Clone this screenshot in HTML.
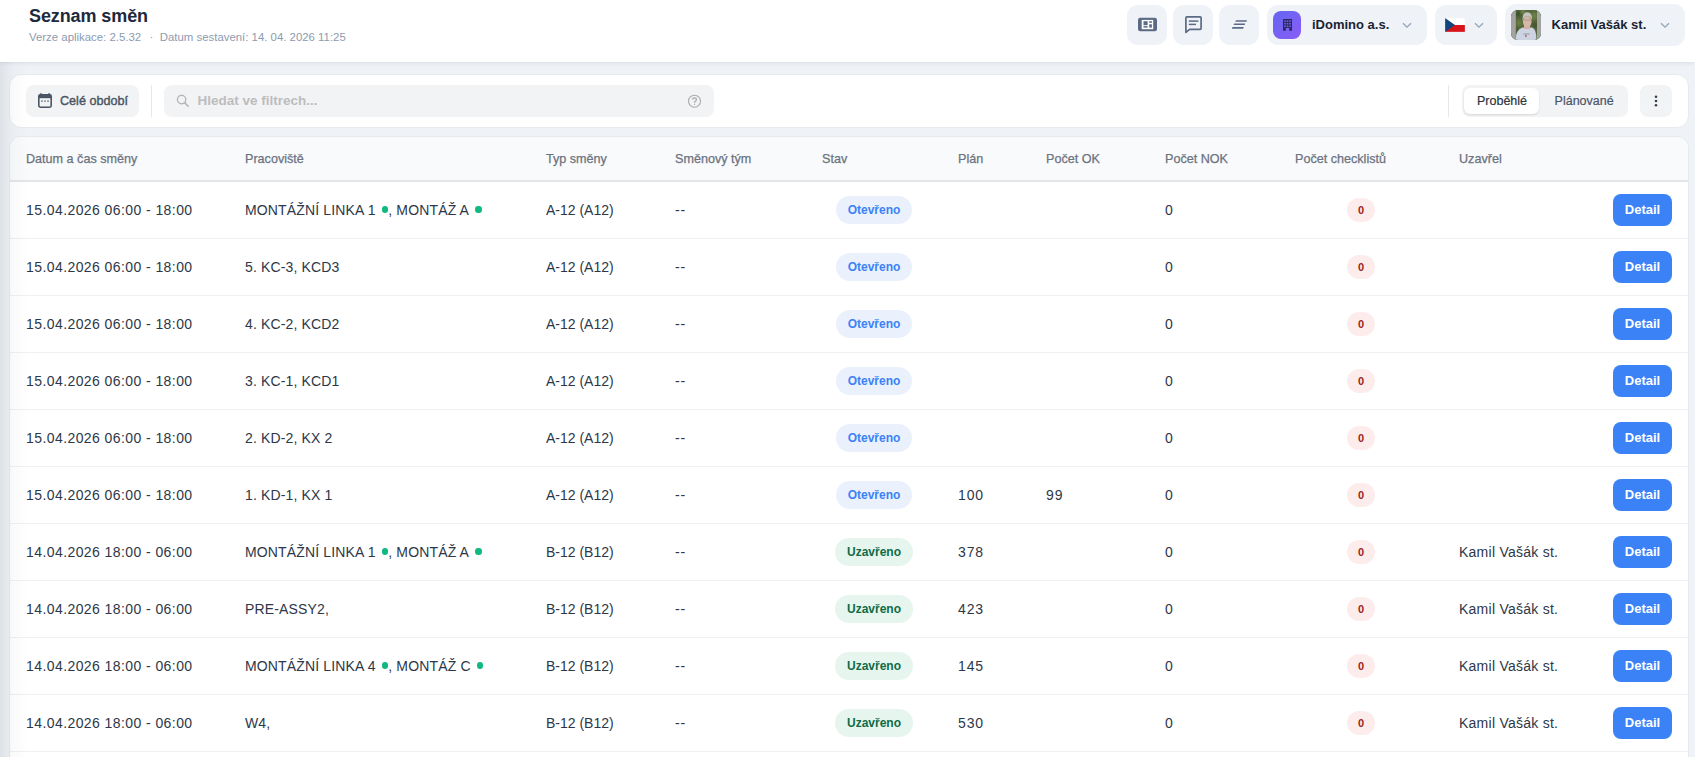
<!DOCTYPE html>
<html><head><meta charset="utf-8">
<style>
*{box-sizing:border-box;margin:0;padding:0}
html,body{width:1695px;height:757px;overflow:hidden}
body{background:#eff2f6;font-family:"Liberation Sans",sans-serif;position:relative;color:#2d3748}
.hdr{position:absolute;left:0;top:0;width:1695px;height:62px;background:#fff;box-shadow:0 1px 4px rgba(30,41,59,.10)}
.title{position:absolute;left:29px;top:7px;line-height:1;font-size:18px;font-weight:bold;color:#1e293b;letter-spacing:-0.1px}
.sub{position:absolute;left:29px;top:32.3px;line-height:1;font-size:11.4px;color:#8d9bb0;white-space:nowrap}
.ib{position:absolute;top:5px;width:40px;height:40px;border-radius:11px;background:#eff3f8}
.ib svg{position:absolute;left:0;top:0}
.drop{position:absolute;border-radius:11px;background:#eff3f8}
.bold{font-weight:bold;color:#1a2332;font-size:14px;position:absolute;white-space:nowrap}
.chev{position:absolute}
.ft{position:absolute;line-height:1;white-space:nowrap}
.card{position:absolute;left:9px;width:1680px;background:#fff;border:1px solid #e6e9ee;border-radius:12px}
.gbtn{position:absolute;background:#f2f3f5;border-radius:8px}
.shadowL{position:absolute;left:0;top:62px;width:30px;height:695px;background:linear-gradient(to right,rgba(15,23,42,.075),rgba(15,23,42,.035) 9px,rgba(15,23,42,.018) 14px,rgba(15,23,42,0) 28px)}
table{position:absolute;left:0;top:0;border-collapse:collapse;table-layout:fixed;width:1678px}
th{height:44px;background:#f9fafb;text-align:left;font-weight:normal;font-size:12.6px;color:#6b7280;padding:0 0 0 16px;border-bottom:2px solid #e3e5e9;-webkit-text-stroke:0.25px #6b7280;white-space:nowrap}
td{height:57px;border-bottom:1px solid #eef0f3;font-size:14px;padding:0 0 0 16px;white-space:nowrap;color:#2d3748}
.num{letter-spacing:0.9px}
.dt{letter-spacing:0.42px}
.wp{letter-spacing:0.15px}
.dd{letter-spacing:0.8px}
.uz{letter-spacing:0.25px}
.dot{display:inline-block;width:6.5px;height:6.5px;border-radius:50%;background:#10b981;margin:0 0 0 6px;vertical-align:2px}
.badge{display:inline-block;height:28px;line-height:28px;border-radius:14px;font-size:12px;font-weight:bold;padding:0 12px}
.open{background:#eaf1fd;color:#3b82f6}
.closed{background:#e6f6ef;color:#0f6b46}
.zero{display:inline-block;width:28px;height:24px;line-height:24px;border-radius:12px;background:#fdecec;color:#a11d1d;font-size:11px;font-weight:bold;text-align:center}
.c{text-align:center;padding:0}
.det{display:inline-block;width:59px;height:32px;line-height:32px;border-radius:8px;background:#3b82f6;color:#fff;font-weight:bold;font-size:13px;text-align:center}
</style></head><body>
<div class="hdr">
  <div class="title">Seznam směn</div>
  <div class="sub"><span style="position:absolute;left:0">Verze aplikace: 2.5.32</span><span style="position:absolute;left:120.5px">·</span><span style="position:absolute;left:130.8px">Datum sestavení: 14. 04. 2026 11:25</span></div>

  <div class="ib" style="left:1127px"><svg width="40" height="40" viewBox="0 0 40 40">
    <rect x="11" y="12.7" width="19" height="13.5" rx="2.2" fill="#5b6b85"/>
    <rect x="14.7" y="14.9" width="11.5" height="9.3" fill="#fff"/>
    <rect x="16.5" y="16.2" width="4.1" height="4" fill="#5b6b85"/>
    <rect x="22.2" y="16.2" width="2.7" height="1.6" fill="#5b6b85"/>
    <rect x="16.5" y="21.1" width="4.1" height="1.5" fill="#5b6b85"/>
    <rect x="22.2" y="19.3" width="2.7" height="3.3" fill="#5b6b85"/>
  </svg></div>
  <div class="ib" style="left:1173px"><svg width="40" height="40" viewBox="0 0 40 40">
    <path d="M13.9,11.8 H27.1 Q28.1,11.8 28.1,12.8 V23.3 Q28.1,24.3 27.1,24.3 H16.6 L12.9,27.4 V12.8 Q12.9,11.8 13.9,11.8 Z" fill="none" stroke="#5b6b85" stroke-width="1.7" stroke-linejoin="round"/>
    <line x1="15.8" y1="16.1" x2="25.4" y2="16.1" stroke="#5b6b85" stroke-width="1.5"/>
    <line x1="15.8" y1="19.4" x2="23" y2="19.4" stroke="#5b6b85" stroke-width="1.5"/>
  </svg></div>
  <div class="ib" style="left:1219px"><svg width="40" height="40" viewBox="0 0 40 40">
    <polygon points="16.9,15.2 28,15.2 27.5,16.8 16.4,16.8" fill="#5b6b85"/>
    <polygon points="15.1,18.5 26.2,18.5 25.7,20.1 14.6,20.1" fill="#5b6b85"/>
    <polygon points="13.4,22.1 24.7,22.1 24.2,23.7 12.9,23.7" fill="#5b6b85"/>
  </svg></div>

  <div class="drop" style="left:1267px;top:5px;width:160px;height:40px">
    <div style="position:absolute;left:6px;top:6px;width:28px;height:28px;border-radius:8px;background:linear-gradient(135deg,#6366f1,#8b5cf6)">
      <svg width="28" height="28" viewBox="0 0 28 28" style="position:absolute;left:0;top:0">
        <path d="M10,8 H19 V19.8 H16.2 V17 H12.8 V19.8 H10 Z" fill="#2c2766"/>
        <g fill="#6d62e6">
          <rect x="11.2" y="9.3" width="1.6" height="1.6"/><rect x="13.7" y="9.3" width="1.6" height="1.6"/><rect x="16.2" y="9.3" width="1.6" height="1.6"/>
          <rect x="11.2" y="11.9" width="1.6" height="1.6"/><rect x="13.7" y="11.9" width="1.6" height="1.6"/><rect x="16.2" y="11.9" width="1.6" height="1.6"/>
          <rect x="11.2" y="14.5" width="1.6" height="1.6"/><rect x="13.7" y="14.5" width="1.6" height="1.6"/><rect x="16.2" y="14.5" width="1.6" height="1.6"/>
        </g>
      </svg>
    </div>
    <div class="bold" style="left:45px;top:12.9px;font-size:13px;line-height:13px">iDomino a.s.</div>
    <svg class="chev" style="left:135px;top:17px" width="10" height="7" viewBox="0 0 10 7"><path d="M1,1.2 L5,5.2 L9,1.2" fill="none" stroke="#94a3b8" stroke-width="1.3"/></svg>
  </div>
  <div class="drop" style="left:1435px;top:5px;width:62px;height:40px">
    <svg style="position:absolute;left:10px;top:13px" width="20" height="14" viewBox="0 0 20 14">
      <rect x="0" y="0" width="20" height="7" fill="#ffffff"/><rect x="0" y="7" width="20" height="7" fill="#d7141a"/><polygon points="0,0 10,7 0,14" fill="#11457e"/>
      <rect x="0" y="0" width="20" height="14" fill="none" stroke="#e5e7eb" stroke-width="0.3"/>
    </svg>
    <svg class="chev" style="left:39px;top:17px" width="10" height="7" viewBox="0 0 10 7"><path d="M1,1.2 L5,5.2 L9,1.2" fill="none" stroke="#94a3b8" stroke-width="1.3"/></svg>
  </div>
  <div class="drop" style="left:1505px;top:4px;width:180px;height:42px">
    <div style="position:absolute;left:6px;top:6px;width:30px;height:30px;border-radius:7px;overflow:hidden;background:#4d6a3c">
      <svg width="30" height="30" viewBox="0 0 30 30" style="position:absolute;left:0;top:0">
        <defs><filter id="bl" x="-20%" y="-20%" width="140%" height="140%"><feGaussianBlur stdDeviation="0.9"/></filter><filter id="bl2"><feGaussianBlur stdDeviation="0.5"/></filter></defs>
        <rect x="0" y="0" width="30" height="30" fill="#55683c"/>
        <g filter="url(#bl)">
          <circle cx="7" cy="4" r="3" fill="#3d5429"/><circle cx="23" cy="6" r="3.5" fill="#6e7d48"/><circle cx="8" cy="13" r="3" fill="#6a7a40"/>
          <circle cx="24" cy="15" r="3" fill="#45592f"/><circle cx="12" cy="2" r="2" fill="#7d8a55"/><circle cx="6" cy="20" r="2.5" fill="#4a5f33"/>
        </g>
        <g filter="url(#bl2)">
          <path d="M4.5,30 Q5,19.5 11.5,17.5 L21,17.5 Q25.5,19 25.5,30 Z" fill="#ccd3e2"/>
          <rect x="13" y="14" width="6" height="5" fill="#d2b1a3"/>
          <ellipse cx="16.2" cy="11.8" rx="4.3" ry="5.6" fill="#d6b7a8"/>
          <path d="M11.6,11 Q11,2 16.4,2.2 Q21.6,2.4 21,11 Q20.3,6.5 16.3,6.6 Q12.4,6.6 11.6,11 Z" fill="#c4c3bf"/>
          <rect x="12.3" y="9.6" width="8" height="0.9" fill="#8b7d75" opacity=".55"/>
          <rect x="12.5" y="23.5" width="6" height="1" fill="#555" opacity=".5"/>
          <rect x="14" y="25" width="1.6" height="2" fill="#d84a4a" opacity=".8"/>
        </g>
        <rect x="0" y="0" width="4.8" height="30" fill="#a3a3a1"/>
        <rect x="26" y="0" width="4" height="30" fill="#a3a3a1"/>
      </svg>
    </div>
    <div class="bold" style="left:46.6px;top:14px;font-size:13px;line-height:13px">Kamil Vašák st.</div>
    <svg class="chev" style="left:155px;top:18px" width="10" height="7" viewBox="0 0 10 7"><path d="M1,1.2 L5,5.2 L9,1.2" fill="none" stroke="#94a3b8" stroke-width="1.3"/></svg>
  </div>
</div>

<div class="card" style="top:74px;height:54px"></div>
<div class="gbtn" style="left:26px;top:85px;width:113px;height:32px"></div>
<svg style="position:absolute;left:38px;top:93px" width="14" height="15" viewBox="0 0 14 15">
  <path d="M3,0.3 V2 M11,0.3 V2" stroke="#4b5563" stroke-width="1.6"/>
  <rect x="0.8" y="1.8" width="12.4" height="12.4" rx="1.6" fill="none" stroke="#4b5563" stroke-width="1.6"/>
  <rect x="0.8" y="1.8" width="12.4" height="3.4" fill="#4b5563"/>
  <rect x="3.2" y="7.5" width="1.5" height="1.2" fill="#4b5563"/><rect x="6.25" y="7.5" width="1.5" height="1.2" fill="#4b5563"/><rect x="9.3" y="7.5" width="1.5" height="1.2" fill="#4b5563"/>
</svg>
<div class="ft" style="left:60px;top:94.6px;font-size:12.6px;color:#4b5563;-webkit-text-stroke:0.4px #4b5563">Celé období</div>
<div style="position:absolute;left:151px;top:85px;width:1px;height:32px;background:#e5e7eb"></div>
<div class="gbtn" style="left:164px;top:85px;width:550px;height:32px"></div>
<svg style="position:absolute;left:176px;top:94px" width="14" height="14" viewBox="0 0 14 14">
  <circle cx="5.6" cy="5.6" r="4.2" fill="none" stroke="#b3b3b3" stroke-width="1.3"/>
  <line x1="8.6" y1="8.6" x2="12.2" y2="12.2" stroke="#b3b3b3" stroke-width="1.5" stroke-linecap="round"/>
</svg>
<div class="ft" style="left:197.5px;top:93.5px;font-size:13.5px;font-weight:bold;color:#bdbdbd">Hledat ve filtrech...</div>
<svg style="position:absolute;left:687px;top:94px" width="15" height="15" viewBox="0 0 15 15">
  <circle cx="7.5" cy="7.2" r="6" fill="none" stroke="#adadad" stroke-width="1.1"/>
  <path d="M5.7,5.6 Q5.7,3.8 7.6,3.8 Q9.4,3.8 9.4,5.4 Q9.4,6.6 8.3,7.2 Q7.6,7.6 7.6,8.7" fill="none" stroke="#a8a8a8" stroke-width="1.3"/>
  <rect x="6.9" y="9.7" width="1.2" height="1.1" fill="#adadad"/>
</svg>
<div style="position:absolute;left:1448px;top:85px;width:1px;height:32px;background:#e5e7eb"></div>
<div class="gbtn" style="left:1462px;top:85px;width:166px;height:32px"></div>
<div style="position:absolute;left:1464px;top:88px;width:75px;height:26px;border-radius:6px;background:#fff;box-shadow:0 1px 2px rgba(0,0,0,.12)"></div>
<div class="ft" style="left:1477px;top:95px;font-size:12.5px;color:#2d3340;-webkit-text-stroke:0.2px #2d3340">Proběhlé</div>
<div class="ft" style="left:1554.6px;top:95px;font-size:12.5px;color:#4a5568;-webkit-text-stroke:0.2px #4a5568">Plánované</div>
<div class="gbtn" style="left:1640px;top:85px;width:32px;height:32px"></div>
<svg style="position:absolute;left:1640px;top:85px" width="32" height="32" viewBox="0 0 32 32">
  <circle cx="16" cy="11.8" r="1.3" fill="#374151"/><circle cx="16" cy="16" r="1.3" fill="#374151"/><circle cx="16" cy="20.2" r="1.3" fill="#374151"/>
</svg>

<div class="card" style="top:136px;height:640px;overflow:hidden">
<table>
<colgroup><col style="width:219px"><col style="width:301px"><col style="width:129px"><col style="width:147px"><col style="width:136px"><col style="width:88px"><col style="width:119px"><col style="width:130px"><col style="width:164px"><col style="width:154px"><col style="width:91px"></colgroup>
<thead><tr><th>Datum a čas směny</th><th>Pracoviště</th><th>Typ směny</th><th>Směnový tým</th><th>Stav</th><th>Plán</th><th>Počet OK</th><th>Počet NOK</th><th>Počet checklistů</th><th>Uzavřel</th><th></th></tr></thead>
<tbody id="tb">
<tr><td class="dt">15.04.2026 06:00 - 18:00</td><td class="wp">MONTÁŽNÍ LINKA 1<span class="dot"></span>, MONTÁŽ A<span class="dot"></span></td><td>A-12 (A12)</td><td class="dd">--</td><td class="c"><span class="badge open">Otevřeno</span></td><td class="num"></td><td class="num"></td><td class="num">0</td><td class="c"><span class="zero">0</span></td><td class="uz"></td><td class="c" style="text-align:right;padding-right:16px"><span class="det">Detail</span></td></tr>
<tr><td class="dt">15.04.2026 06:00 - 18:00</td><td class="wp">5. KC-3, KCD3</td><td>A-12 (A12)</td><td class="dd">--</td><td class="c"><span class="badge open">Otevřeno</span></td><td class="num"></td><td class="num"></td><td class="num">0</td><td class="c"><span class="zero">0</span></td><td class="uz"></td><td class="c" style="text-align:right;padding-right:16px"><span class="det">Detail</span></td></tr>
<tr><td class="dt">15.04.2026 06:00 - 18:00</td><td class="wp">4. KC-2, KCD2</td><td>A-12 (A12)</td><td class="dd">--</td><td class="c"><span class="badge open">Otevřeno</span></td><td class="num"></td><td class="num"></td><td class="num">0</td><td class="c"><span class="zero">0</span></td><td class="uz"></td><td class="c" style="text-align:right;padding-right:16px"><span class="det">Detail</span></td></tr>
<tr><td class="dt">15.04.2026 06:00 - 18:00</td><td class="wp">3. KC-1, KCD1</td><td>A-12 (A12)</td><td class="dd">--</td><td class="c"><span class="badge open">Otevřeno</span></td><td class="num"></td><td class="num"></td><td class="num">0</td><td class="c"><span class="zero">0</span></td><td class="uz"></td><td class="c" style="text-align:right;padding-right:16px"><span class="det">Detail</span></td></tr>
<tr><td class="dt">15.04.2026 06:00 - 18:00</td><td class="wp">2. KD-2, KX 2</td><td>A-12 (A12)</td><td class="dd">--</td><td class="c"><span class="badge open">Otevřeno</span></td><td class="num"></td><td class="num"></td><td class="num">0</td><td class="c"><span class="zero">0</span></td><td class="uz"></td><td class="c" style="text-align:right;padding-right:16px"><span class="det">Detail</span></td></tr>
<tr><td class="dt">15.04.2026 06:00 - 18:00</td><td class="wp">1. KD-1, KX 1</td><td>A-12 (A12)</td><td class="dd">--</td><td class="c"><span class="badge open">Otevřeno</span></td><td class="num">100</td><td class="num">99</td><td class="num">0</td><td class="c"><span class="zero">0</span></td><td class="uz"></td><td class="c" style="text-align:right;padding-right:16px"><span class="det">Detail</span></td></tr>
<tr><td class="dt">14.04.2026 18:00 - 06:00</td><td class="wp">MONTÁŽNÍ LINKA 1<span class="dot"></span>, MONTÁŽ A<span class="dot"></span></td><td>B-12 (B12)</td><td class="dd">--</td><td class="c"><span class="badge closed">Uzavřeno</span></td><td class="num">378</td><td class="num"></td><td class="num">0</td><td class="c"><span class="zero">0</span></td><td class="uz">Kamil Vašák st.</td><td class="c" style="text-align:right;padding-right:16px"><span class="det">Detail</span></td></tr>
<tr><td class="dt">14.04.2026 18:00 - 06:00</td><td class="wp">PRE-ASSY2,</td><td>B-12 (B12)</td><td class="dd">--</td><td class="c"><span class="badge closed">Uzavřeno</span></td><td class="num">423</td><td class="num"></td><td class="num">0</td><td class="c"><span class="zero">0</span></td><td class="uz">Kamil Vašák st.</td><td class="c" style="text-align:right;padding-right:16px"><span class="det">Detail</span></td></tr>
<tr><td class="dt">14.04.2026 18:00 - 06:00</td><td class="wp">MONTÁŽNÍ LINKA 4<span class="dot"></span>, MONTÁŽ C<span class="dot"></span></td><td>B-12 (B12)</td><td class="dd">--</td><td class="c"><span class="badge closed">Uzavřeno</span></td><td class="num">145</td><td class="num"></td><td class="num">0</td><td class="c"><span class="zero">0</span></td><td class="uz">Kamil Vašák st.</td><td class="c" style="text-align:right;padding-right:16px"><span class="det">Detail</span></td></tr>
<tr><td class="dt">14.04.2026 18:00 - 06:00</td><td class="wp">W4,</td><td>B-12 (B12)</td><td class="dd">--</td><td class="c"><span class="badge closed">Uzavřeno</span></td><td class="num">530</td><td class="num"></td><td class="num">0</td><td class="c"><span class="zero">0</span></td><td class="uz">Kamil Vašák st.</td><td class="c" style="text-align:right;padding-right:16px"><span class="det">Detail</span></td></tr>
</tbody>
</table>
</div>
<div class="shadowL"></div>
</body></html>
